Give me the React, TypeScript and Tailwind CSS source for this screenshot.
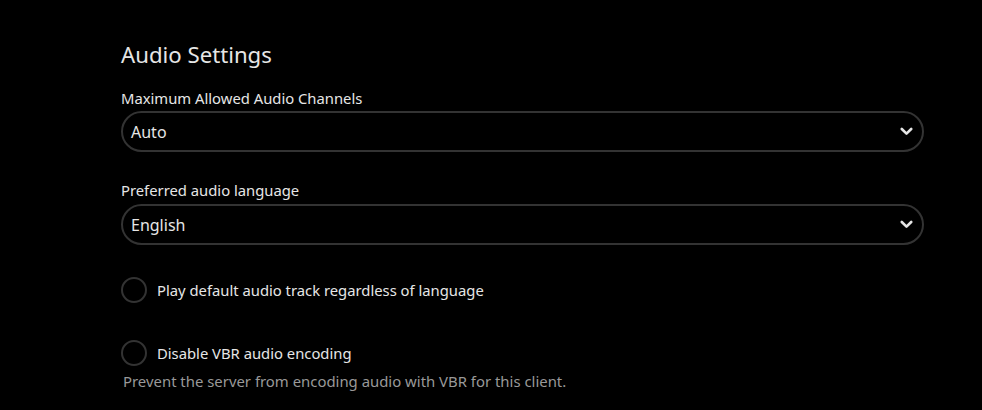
import React from "react";

function Chevron() {
  return (
    <svg width="13" height="9" viewBox="0 0 13 9" fill="none" stroke="#e6e6e6" strokeWidth="2.6" strokeLinecap="round" strokeLinejoin="round">
      <path d="M1.8 2 L6.5 6.6 L11.2 2" />
    </svg>
  );
}

function Select({ value }: { value: string }) {
  return (
    <div className="flex h-[41px] w-[803px] items-center justify-between rounded-full border-2 border-[#333333] pl-[8px] pr-[9px] text-[16px] text-[#e6e6e6]">
      <span>{value}</span>
      <Chevron />
    </div>
  );
}

function Check({ label }: { label: string }) {
  return (
    <div className="flex items-center gap-[10px]">
      <div className="h-[26px] w-[26px] shrink-0 rounded-full border-2 border-[#333333]" />
      <span className="text-[14.8px] leading-[20px] text-[#e6e6e6]">{label}</span>
    </div>
  );
}

export default function App() {
  return (
    <div className="h-[410px] w-[982px] bg-black" style={{ fontFamily: '"Noto Sans", sans-serif' }}>
      <div className="flex flex-col pl-[121px] pt-[40px]">
        <h2 className="text-[22.2px] leading-[30px] text-[#e6e6e6]">Audio Settings</h2>
        <label className="mt-[18px] text-[14.8px] leading-[20px] text-[#e6e6e6]">Maximum Allowed Audio Channels</label>
        <div className="mt-[3px]"><Select value="Auto" /></div>
        <label className="mt-[28px] text-[14.8px] leading-[20px] text-[#e6e6e6]">Preferred audio language</label>
        <div className="mt-[4px]"><Select value="English" /></div>
        <div className="mt-[32px]"><Check label="Play default audio track regardless of language" /></div>
        <div className="mt-[37px]"><Check label="Disable VBR audio encoding" /></div>
        <p className="mt-[5px] pl-[2px] text-[14.9px] leading-[20px] text-[#999999]">Prevent the server from encoding audio with VBR for this client.</p>
      </div>
    </div>
  );
}
